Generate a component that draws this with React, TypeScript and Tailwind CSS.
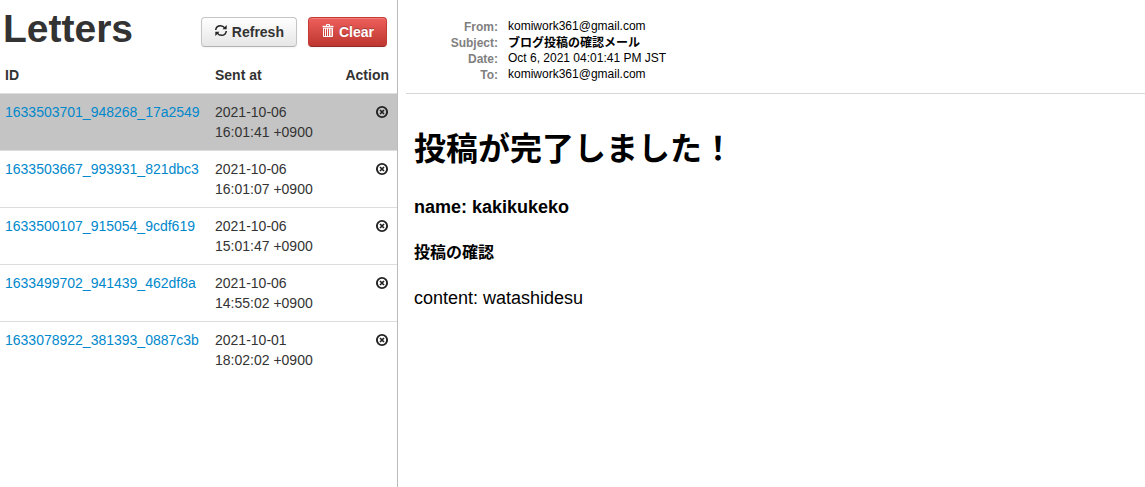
const letters = [
  { id: "1633503701_948268_17a2549", date: "2021-10-06", time: "16:01:41 +0900", active: true },
  { id: "1633503667_993931_821dbc3", date: "2021-10-06", time: "16:01:07 +0900", active: false },
  { id: "1633500107_915054_9cdf619", date: "2021-10-06", time: "15:01:47 +0900", active: false },
  { id: "1633499702_941439_462df8a", date: "2021-10-06", time: "14:55:02 +0900", active: false },
  { id: "1633078922_381393_0887c3b", date: "2021-10-01", time: "18:02:02 +0900", active: false },
];

function RefreshIcon() {
  return (
    <svg className="mb-0.5 h-3.5 w-3.5" viewBox="0 0 14 14" fill="none" stroke="#222" strokeWidth="1.5" aria-hidden="true">
      <path d="M1.7 6C2 3.4 4.2 1.7 6.5 1.7c1.9 0 3.2.8 4.2 2.2" />
      <path d="M12.3 7C12 9.6 9.8 11.3 7.5 11.3c-1.9 0-3.2-.8-4.2-2.2" />
      <path d="M12.7 1v4.2H8.5z" fill="#222" stroke="none" />
      <path d="M1.3 12V7.8H5.5z" fill="#222" stroke="none" />
    </svg>
  );
}

function TrashIcon() {
  return (
    <svg className="mb-0.5 h-3.5 w-3.5" viewBox="0 0 14 14" fill="none" stroke="#fff" strokeWidth="1" aria-hidden="true">
      <path d="M5.5 2V.5h3V2" />
      <path d="M1.5 2.5h11" strokeWidth="1.4" />
      <path d="M2.5 4v8.5h9V4M4.5 4v8M6.5 4v8M8.5 4v8M10 4v8M2 4.2h10" />
    </svg>
  );
}

function RemoveIcon() {
  return (
    <svg className="h-3.5 w-3.5" viewBox="0 0 14 14" fill="none" stroke="#222" aria-hidden="true">
      <circle cx="7" cy="7" r="5.1" strokeWidth="1.9" />
      <path d="M5 5l4 4M9 5l-4 4" strokeWidth="1.7" />
    </svg>
  );
}

function MetaRow({ label, value, bold = false }: { label: string; value: string; bold?: boolean }) {
  return (
    <>
      <dt className="text-right leading-4 font-bold text-[#7f7f7f]">{label}</dt>
      <dd className={bold ? "leading-4 font-bold" : "leading-[15px]"}>{value}</dd>
    </>
  );
}

export default function App() {
  return (
    <div className="flex min-h-screen bg-white font-['Liberation_Sans','Noto_Sans_CJK_JP',sans-serif]">
      <aside className="w-[398px] shrink-0 border-r border-[#bbb] text-sm leading-5 text-[#333]">
        <header className="flex items-start justify-between pr-2.5 pl-[3px]">
          <h1 className="pt-[9px] text-[39px] leading-10 font-bold">Letters</h1>
          <div className="flex gap-[11px] pt-[17px]">
            <button
              type="button"
              className="flex h-[30px] items-center gap-1 rounded border border-[#c5c5c5] border-b-[#b3b3b3] bg-linear-to-b from-white to-[#e6e6e6] px-3 font-bold shadow-[inset_0_1px_0_rgba(255,255,255,.2),0_1px_2px_rgba(0,0,0,.05)]"
            >
              <RefreshIcon />
              Refresh
            </button>
            <button
              type="button"
              className="flex h-[30px] items-center gap-1 rounded border border-[#c43c35] border-b-[#942a25] bg-linear-to-b from-[#ee5f5b] to-[#bd362f] px-3 font-bold text-white shadow-[inset_0_1px_0_rgba(255,255,255,.2),0_1px_2px_rgba(0,0,0,.05)] [text-shadow:0_-1px_0_rgba(0,0,0,.25)]"
            >
              <TrashIcon />
              Clear
            </button>
          </div>
        </header>
        <table className="mt-2 w-full table-fixed border-collapse text-left">
          <colgroup>
            <col className="w-[210px]" />
            <col className="w-[116px]" />
            <col />
          </colgroup>
          <thead>
            <tr>
              <th className="px-[5px] py-2">ID</th>
              <th className="px-[5px] py-2">Sent at</th>
              <th className="py-2 pr-2 text-right">Action</th>
            </tr>
          </thead>
          <tbody>
            {letters.map((letter) => (
              <tr key={letter.id} className={letter.active ? "border-t border-[#ddd] bg-[#c4c4c4]" : "border-t border-[#ddd]"}>
                <td className="px-[5px] py-2 align-top">
                  <a href="#letter" className="text-[#0088cc]">{letter.id}</a>
                </td>
                <td className="px-[5px] py-2 align-top">
                  {letter.date}
                  <br />
                  {letter.time}
                </td>
                <td className="py-2 pr-2 align-top">
                  <button type="button" aria-label={`Delete ${letter.id}`} className="ml-auto flex h-5 items-center">
                    <RemoveIcon />
                  </button>
                </td>
              </tr>
            ))}
          </tbody>
        </table>
      </aside>
      <main className="min-w-0 flex-1 pl-2 text-black">
        <header className="border-b border-[#d8d8d8] pt-[19px] pb-2.5">
          <dl className="grid grid-cols-[92px_1fr] gap-x-2.5 text-xs">
            <MetaRow label="From:" value="komiwork361@gmail.com" />
            <MetaRow label="Subject:" value="ブログ投稿の確認メール" bold />
            <MetaRow label="Date:" value="Oct 6, 2021 04:01:41 PM JST" />
            <MetaRow label="To:" value="komiwork361@gmail.com" />
          </dl>
        </header>
        <article className="px-2 pt-[31px]">
          <h1 className="text-[32px] leading-[48px] font-bold">投稿が完了しました！</h1>
          <h3 className="mt-[21px] text-lg leading-[26px] font-bold">name: kakikukeko</h3>
          <h4 className="mt-[21px] text-base leading-6 font-bold">投稿の確認</h4>
          <p className="mt-[21px] text-lg leading-6">content: watashidesu</p>
        </article>
      </main>
    </div>
  );
}
